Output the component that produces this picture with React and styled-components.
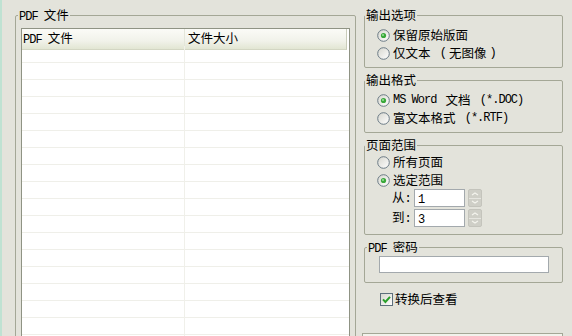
import React from 'react';
import styled, { createGlobalStyle } from 'styled-components';

const GlobalStyle = createGlobalStyle`
  html, body {
    margin: 0;
    padding: 0;
    background: #e3e3db;
  }
  body {
    font-family: "Noto Sans CJK SC", "Liberation Sans", sans-serif;
    font-size: 12.5px;
    color: #000;
    text-autospace: no-autospace;
  }
`;

const Window = styled.div`
  display: flex;
  align-items: flex-start;
  width: 572px;
  height: 336px;
  overflow: hidden;
  background: #e3e3db;
`;

const EdgeStrip = styled.div`
  flex: none;
  align-self: stretch;
  width: 2px;
  background: #bfe2d2;
`;

const LeftPane = styled.div`
  flex: none;
  width: 341px;
  margin-left: 13px;
  padding-top: 8px;
`;

const RightPane = styled.div`
  flex: none;
  width: 199px;
  margin-left: 8px;
  padding-top: 8px;
  display: flex;
  flex-direction: column;
  gap: 5px;
`;

const Group = styled.fieldset`
  flex: none;
  margin: 0;
  min-width: 0;
  padding: ${p => p.$pad || '4px 12px 5px'};
  border: 1px solid #a4a796;
  border-radius: 2px;
`;

const Legend = styled.legend`
  padding: 0 1px;
  margin-left: ${p => p.$shift || -12}px;
  height: 14px;
  line-height: 14px;
  font-size: 12.5px;
  white-space: nowrap;
`;

const Latin = styled.span`
  font-family: "Liberation Mono", monospace;
  font-size: 12px;
  letter-spacing: -1px;
  white-space: pre;
`;

const ListView = styled.div`
  border: 1px solid #8f9384;
  background: #fff;
  height: 330px;
  overflow: hidden;
`;

const HeaderRow = styled.div`
  display: grid;
  grid-template-columns: 163px 162px 1fr;
  height: 17px;
`;

const HeaderCell = styled.div`
  padding-left: ${p => p.$indent || 1}px;
  line-height: 17px;
  background: linear-gradient(#fbfbf7, #f1f2ea 60%, #e2e6d3);
  border-right: 1px solid ${p => (p.$last ? '#c9ccba' : '#e4e6da')};
  border-bottom: 1px solid #d3d6c3;
  white-space: nowrap;
`;

const Row = styled.div`
  display: grid;
  grid-template-columns: 163px 1fr;
  height: 17px;
  border-bottom: 1px solid #efefe9;
  box-sizing: border-box;
`;

const Cell = styled.div`
  border-right: ${p => (p.$first ? '1px solid #f0f0ea' : 'none')};
`;

const OptionRow = styled.label`
  display: flex;
  align-items: center;
  gap: 3px;
  height: 18px;
  line-height: 14px;
  white-space: nowrap;
`;

const SpinRow = styled.div`
  display: flex;
  align-items: center;
  height: 18px;
  line-height: 14px;
  padding-left: 15px;
  margin-top: ${p => p.$top || 0}px;
`;

const SpinLabel = styled.span`
  width: 22px;
  flex: none;
`;

const NumberBox = styled.div`
  width: 51px;
  height: 18px;
  box-sizing: border-box;
  background: #fff;
  border: 1px solid #a3a9ad;
  padding-left: 3px;
  line-height: 16px;
`;

const Spinner = styled.div`
  width: 14px;
  height: 18px;
  margin-left: 3px;
  box-sizing: border-box;
  display: flex;
  flex-direction: column;
  border: 1px solid #c4c4bc;
  border-radius: 2px;
  background: #cfcfc7;
`;

const SpinHalf = styled.div`
  flex: 1;
  display: flex;
  align-items: center;
  justify-content: center;
  border-top: ${p => (p.$down ? '1px solid #e6e6e0' : 'none')};
`;

const PasswordBox = styled.div`
  width: 170px;
  height: 17px;
  box-sizing: border-box;
  background: #fff;
  border: 1px solid #a3a9ad;
`;

const CheckRow = styled.label`
  flex: none;
  display: flex;
  align-items: center;
  gap: 2px;
  height: 18px;
  line-height: 14px;
  margin-top: 2px;
  padding-left: 16px;
`;

const BottomBox = styled.div`
  margin-top: 20px;
  margin-left: -2px;
  width: 199px;
  height: 12px;
  flex: none;
  border: 1px solid #a4a796;
  border-bottom: none;
  background: #f2f2ec;
`;

function RadioMark({ checked }) {
  return (
    <svg width="13" height="13" viewBox="0 0 13 13">
      <defs>
        <linearGradient id="radioFill" x1="0" y1="0" x2="1" y2="1">
          <stop offset="0" stopColor="#d6d6ce" />
          <stop offset="1" stopColor="#ffffff" />
        </linearGradient>
      </defs>
      <circle cx="6.5" cy="6.5" r="5.8" fill="url(#radioFill)" stroke="#6b7b86" strokeWidth="1" />
      {checked && <circle cx="6.5" cy="6.5" r="2.6" fill="#39a83a" />}
      {checked && <circle cx="6" cy="6" r="1" fill="#9be09b" />}
    </svg>
  );
}

function CheckMark() {
  return (
    <svg width="13" height="13" viewBox="0 0 13 13">
      <defs>
        <linearGradient id="checkFill" x1="0" y1="0" x2="1" y2="1">
          <stop offset="0" stopColor="#d6d6ce" />
          <stop offset="1" stopColor="#ffffff" />
        </linearGradient>
      </defs>
      <rect x="0.5" y="0.5" width="12" height="12" fill="url(#checkFill)" stroke="#5d6f7c" />
      <path d="M3 6.4 L5.4 9 L10 3.8" fill="none" stroke="#2a9f2a" strokeWidth="2" />
    </svg>
  );
}

function Arrow({ down }) {
  return (
    <svg width="8" height="4" viewBox="0 0 8 4">
      <path d={down ? 'M1 1 L4 3 L7 1' : 'M1 3 L4 1 L7 3'} fill="none" stroke="#f4f4ee" strokeWidth="1.2" />
    </svg>
  );
}

function SpinField({ label, value, top }) {
  return (
    <SpinRow $top={top}>
      <SpinLabel>{label}<Latin>:</Latin></SpinLabel>
      <NumberBox><Latin>{value}</Latin></NumberBox>
      <Spinner>
        <SpinHalf><Arrow /></SpinHalf>
        <SpinHalf $down><Arrow down /></SpinHalf>
      </Spinner>
    </SpinRow>
  );
}

const rows = Array.from({ length: 18 }, (_, i) => i);

export default function App() {
  return (
    <>
      <GlobalStyle />
      <Window>
        <EdgeStrip />
        <LeftPane>
          <Group $pad="6px 5px 5px">
            <Legend $shift={-3}><Latin>PDF </Latin>文件</Legend>
            <ListView>
              <HeaderRow>
                <HeaderCell><Latin>PDF </Latin>文件</HeaderCell>
                <HeaderCell $indent={3} $last>文件大小</HeaderCell>
                <div />
              </HeaderRow>
              {rows.map(i => (
                <Row key={i}>
                  <Cell $first />
                  <Cell />
                </Row>
              ))}
            </ListView>
          </Group>
        </LeftPane>
        <RightPane>
          <Group>
            <Legend>输出选项</Legend>
            <OptionRow><RadioMark checked />保留原始版面</OptionRow>
            <OptionRow><RadioMark />仅文本<Latin> (</Latin>无图像<Latin>)</Latin></OptionRow>
          </Group>
          <Group>
            <Legend>输出格式</Legend>
            <OptionRow><RadioMark checked /><Latin>MS Word </Latin>文档<Latin> (*.DOC)</Latin></OptionRow>
            <OptionRow><RadioMark />富文本格式<Latin> (*.RTF)</Latin></OptionRow>
          </Group>
          <Group $pad="1px 12px 7px">
            <Legend>页面范围</Legend>
            <OptionRow><RadioMark />所有页面</OptionRow>
            <OptionRow><RadioMark checked />选定范围</OptionRow>
            <SpinField label="从" value="1" />
            <SpinField label="到" value="3" top={2} />
          </Group>
          <Group $pad="2px 13px 9px 14px">
            <Legend $shift={-12}><Latin>PDF </Latin>密码</Legend>
            <PasswordBox />
          </Group>
          <CheckRow><CheckMark />转换后查看</CheckRow>
          <BottomBox />
        </RightPane>
      </Window>
    </>
  );
}
